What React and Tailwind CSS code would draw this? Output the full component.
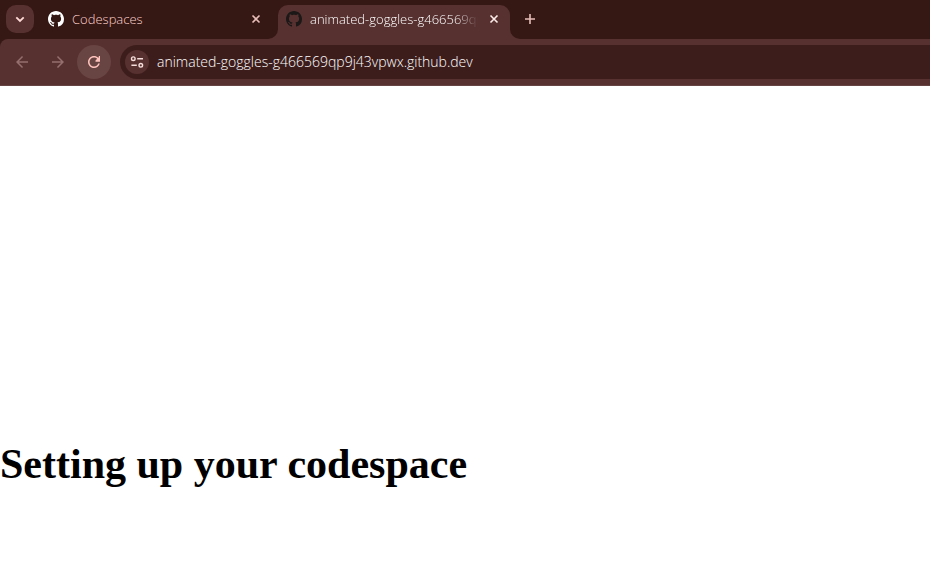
import React from "react";

const GITHUB_PATH =
  "M8 0C3.58 0 0 3.58 0 8c0 3.54 2.29 6.53 5.47 7.59.4.07.55-.17.55-.38 0-.19-.01-.82-.01-1.49-2.01.37-2.53-.49-2.69-.94-.09-.23-.48-.94-.82-1.13-.28-.15-.68-.52-.01-.53.63-.01 1.08.58 1.23.82.72 1.21 1.87.87 2.33.66.07-.52.28-.87.51-1.07-1.78-.2-3.64-.89-3.64-3.95 0-.87.31-1.59.82-2.15-.08-.2-.36-1.02.08-2.12 0 0 .67-.21 2.2.82.64-.18 1.32-.27 2-.27s1.36.09 2 .27c1.53-1.04 2.2-.82 2.2-.82.44 1.1.16 1.92.08 2.12.51.56.82 1.27.82 2.15 0 3.07-1.87 3.75-3.65 3.95.29.25.54.73.54 1.48 0 1.07-.01 1.93-.01 2.2 0 .21.15.46.55.38A8.01 8.01 0 0 0 16 8c0-4.42-3.58-8-8-8Z";

function GithubMark({ className }) {
  return (
    <svg viewBox="0 0 16 16" fill="currentColor" aria-hidden="true" className={`size-4 shrink-0 ${className}`}>
      <path d={GITHUB_PATH} />
    </svg>
  );
}

function LineIcon({ d, width = 1.6 }) {
  return (
    <svg viewBox="0 0 16 16" fill="none" stroke="currentColor" strokeWidth={width} aria-hidden="true" className="size-4">
      <path d={d} />
    </svg>
  );
}

function SolidIcon({ d }) {
  return (
    <svg viewBox="0 0 24 24" fill="currentColor" aria-hidden="true" className="size-[18px]">
      <path d={d} />
    </svg>
  );
}

function CloseButton() {
  return (
    <button type="button" aria-label="Close tab" className="flex size-4 shrink-0 items-center justify-center">
      <LineIcon d="M4.5 4.5l7 7M11.5 4.5l-7 7" />
    </button>
  );
}

function TabStrip() {
  return (
    <div className="flex h-[39px] bg-[#573130] text-[13px] leading-5">
      <div className="flex w-[278px] shrink-0 items-center rounded-br-[10px] bg-[#351714] pb-px pl-1.5 pr-3.5 text-[#e7bdb8]">
        <button
          type="button"
          aria-label="Search tabs"
          className="flex size-7 shrink-0 items-center justify-center rounded-[10px] bg-[#573130] text-[#ffdad6]"
        >
          <LineIcon d="M4.3 6.3L8 10l3.7-3.7" width={1.8} />
        </button>
        <GithubMark className="ml-3.5 text-white" />
        <span className="ml-2 flex-1 text-[#ffd3cd]">Codespaces</span>
        <CloseButton />
      </div>
      <div className="w-[232px] shrink-0 bg-[#351714] pt-[5px]">
        <div className="flex h-[34px] items-center rounded-t-[10px] bg-[#573130] px-2 pb-1.5 text-[#ffedea]">
          <GithubMark className="text-[#1b1817]" />
          <span className="ml-2 mr-2 min-w-0 flex-1 overflow-hidden whitespace-nowrap text-white [mask-image:linear-gradient(to_right,black_86%,transparent)]">
            animated-goggles-g466569qp9j43vpwx.github.dev
          </span>
          <CloseButton />
        </div>
      </div>
      <div className="flex flex-1 items-center rounded-bl-[10px] bg-[#351714] pb-px pl-3 text-[#e7bdb8]">
        <button type="button" aria-label="New tab" className="flex size-4 items-center justify-center">
          <LineIcon d="M8 3v10M3 8h10" />
        </button>
      </div>
    </div>
  );
}

function Toolbar() {
  return (
    <div className="bg-[#351714]">
      <div className="flex h-[47px] items-center rounded-tl-lg border-b border-[#664443] bg-[#573130] pl-[5px]">
        <button type="button" aria-label="Back" className="flex size-[34px] items-center justify-center text-[#946f6d]">
          <SolidIcon d="M20 11H7.83l5.59-5.59L12 4l-8 8 8 8 1.41-1.41L7.83 13H20v-2z" />
        </button>
        <button type="button" aria-label="Forward" className="ml-0.5 flex size-[34px] items-center justify-center text-[#946f6d]">
          <SolidIcon d="M12 4l-1.41 1.41L16.17 11H4v2h12.17l-5.58 5.59L12 20l8-8z" />
        </button>
        <button
          type="button"
          aria-label="Reload"
          className="ml-0.5 flex size-[34px] items-center justify-center rounded-full bg-[#684443] text-[#ffc3bd]"
        >
          <SolidIcon d="M17.65 6.35C16.2 4.9 14.21 4 12 4c-4.42 0-7.99 3.58-7.99 8s3.57 8 7.99 8c3.73 0 6.84-2.55 7.73-6h-2.08c-.82 2.33-3.04 4-5.65 4-3.31 0-6-2.69-6-6s2.69-6 6-6c1.66 0 3.14.69 4.22 1.78L14 9.9v1.6h6V4h-1.6v1.6z" />
        </button>
        <div className="ml-[9px] flex h-[34px] min-w-0 flex-1 items-center rounded-l-full bg-[#3d1d1c] pl-[5px]">
          <button
            type="button"
            aria-label="View site information"
            className="flex size-6 shrink-0 items-center justify-center rounded-full bg-[#573130] text-[#f5dedb]"
          >
            <svg viewBox="0 0 16 16" fill="none" stroke="currentColor" strokeWidth="1.4" aria-hidden="true" className="size-4">
              <circle cx="4.3" cy="4.7" r="1.8" />
              <path d="M8.2 4.7H14M2.4 11.3h5.4" />
              <circle cx="11.8" cy="11.3" r="1.8" />
            </svg>
          </button>
          <input
            type="text"
            aria-label="Address"
            defaultValue="animated-goggles-g466569qp9j43vpwx.github.dev"
            className="ml-2 min-w-0 flex-1 bg-transparent text-[14px] font-light leading-5 text-white outline-none"
          />
        </div>
      </div>
    </div>
  );
}

export default function App() {
  return (
    <div className="flex min-h-screen flex-col bg-white">
      <header className="font-['Open_Sans',sans-serif] font-light">
        <TabStrip />
        <Toolbar />
      </header>
      <main className="flex-1 pt-[354px]">
        <h1 className="font-['Liberation_Serif',serif] text-[42px] font-bold leading-[48px] text-black">
          Setting up your codespace
        </h1>
      </main>
    </div>
  );
}
